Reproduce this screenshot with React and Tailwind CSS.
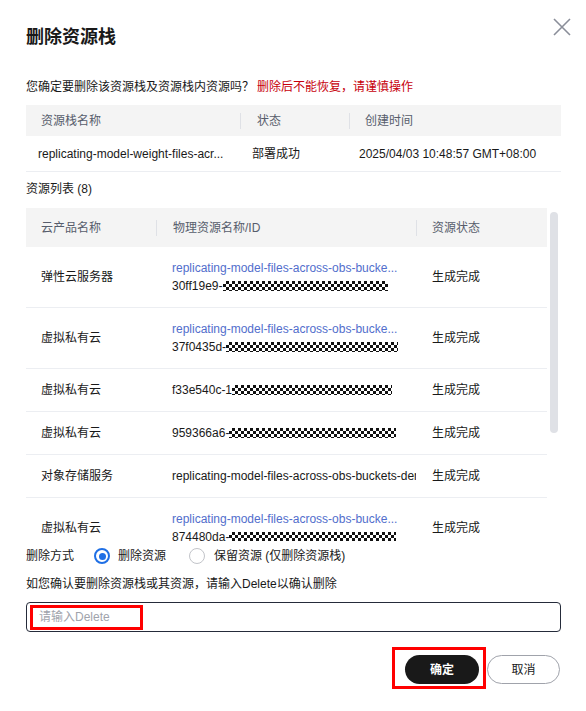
const font = "font-['Liberation_Sans','Noto_Sans_CJK_SC',sans-serif]";

const resources = [
  { type: "弹性云服务器", link: "replicating-model-files-across-obs-bucke...", id: "30ff19e9-", mask: "w-[165px]" },
  { type: "虚拟私有云", link: "replicating-model-files-across-obs-bucke...", id: "37f0435d-", mask: "w-[172px]" },
  { type: "虚拟私有云", id: "f33e540c-1", mask: "w-[160px]" },
  { type: "虚拟私有云", id: "959366a6-", mask: "w-[167px]" },
  { type: "对象存储服务", plain: "replicating-model-files-across-obs-buckets-demo" },
  { type: "虚拟私有云", link: "replicating-model-files-across-obs-bucke...", id: "874480da-", mask: "w-[167px]" },
];

const Mask = ({ w }) => (
  <span
    className={`inline-block h-[10px] align-middle ${w} bg-[repeating-conic-gradient(#111_0_25%,#fff_0_50%)] bg-[length:6px_6px]`}
  ></span>
);

const App = () => {
  return (
    <div className={`w-[586px] h-[711px] bg-white overflow-hidden text-[12px] text-[#191919] ${font}`}>
      <div className="flex items-start justify-between pl-[26px] pr-[15px]">
        <h1 className="pt-[25px] text-[18px] leading-[24px] font-bold text-[#191919]">删除资源栈</h1>
        <svg className="mt-[18px]" width="18" height="18" viewBox="0 0 18 18" fill="none">
          <path d="M1 1L17 17M17 1L1 17" stroke="#8a8e99" strokeWidth="1.6" />
        </svg>
      </div>

      <div className="px-[26px]">
        <p className="mt-[29px] leading-[18px]">
          您确定要删除该资源栈及资源栈内资源吗？
          <span className="ml-[3px] text-[#c7000b]">删除后不能恢复，请谨慎操作</span>
        </p>

        <div className="mt-[9px] w-[535px]">
          <div className="flex h-[31px] items-center bg-[#f4f4f4] text-[#575d6c]">
            <div className="w-[214px] pl-[15px]">资源栈名称</div>
            <div className="w-[109px] flex items-center">
              <span className="h-[16px] w-px bg-[#dfe1e6]"></span>
              <span className="pl-[16px]">状态</span>
            </div>
            <div className="flex-1 flex items-center">
              <span className="h-[16px] w-px bg-[#dfe1e6]"></span>
              <span className="pl-[15px]">创建时间</span>
            </div>
          </div>
          <div className="flex h-[36px] items-center border-b border-[#eceef2]">
            <div className="w-[214px] pl-[12px] whitespace-nowrap">replicating-model-weight-files-acr...</div>
            <div className="w-[109px] pl-[12px]">部署成功</div>
            <div className="flex-1 pl-[10px] whitespace-nowrap">2025/04/03 10:48:57 GMT+08:00</div>
          </div>
        </div>

        <p className="mt-[8px] leading-[18px]">资源列表 (8)</p>

        <div className="mt-[10px] flex h-[333px]">
          <div className="w-[521px] overflow-hidden">
            <div className="flex h-[39px] items-center bg-[#f4f4f4] text-[#575d6c]">
              <div className="w-[130px] pl-[15px]">云产品名称</div>
              <div className="w-[260px] flex items-center">
                <span className="h-[16px] w-px bg-[#dfe1e6]"></span>
                <span className="pl-[16px]">物理资源名称/ID</span>
              </div>
              <div className="flex-1 flex items-center">
                <span className="h-[16px] w-px bg-[#dfe1e6]"></span>
                <span className="pl-[15px]">资源状态</span>
              </div>
            </div>
            {resources.map((r, i) => (
              <div
                key={i}
                className={`flex items-center border-b border-[#eceef2] ${r.link ? "h-[61px]" : "h-[43px]"}`}
              >
                <div className="w-[130px] pl-[15px]">{r.type}</div>
                <div className="w-[260px] pl-[16px] pr-[1px] overflow-hidden whitespace-nowrap leading-[18px]">
                  {r.link && <div className="text-[#526ecc]">{r.link}</div>}
                  {r.plain && <div>{r.plain}</div>}
                  {r.id && (
                    <div className="flex items-center">
                      <span>{r.id}</span>
                      <Mask w={r.mask} />
                    </div>
                  )}
                </div>
                <div className="flex-1 pl-[16px]">生成完成</div>
              </div>
            ))}
          </div>
          <div className="ml-[3px] w-[8px] pt-[4px]">
            <div className="h-[221px] w-[8px] rounded-full bg-[#dfe1e6]"></div>
          </div>
        </div>

        <div className="mt-[5px] flex h-[20px] items-center">
          <span className="w-[68px]">删除方式</span>
          <span className="flex h-[16px] w-[16px] items-center justify-center rounded-full border-2 border-[#1f6fe5]">
            <span className="h-[7px] w-[7px] rounded-full bg-[#1f6fe5]"></span>
          </span>
          <span className="ml-[8px]">删除资源</span>
          <span className="ml-[23px] h-[16px] w-[16px] rounded-full border border-[#c2c4c9]"></span>
          <span className="ml-[9px]">保留资源 (仅删除资源栈)</span>
        </div>

        <p className="mt-[9px] leading-[18px]">如您确认要删除资源栈或其资源，请输入Delete以确认删除</p>

        <div className="mt-[9px] flex h-[30px] w-[535px] items-center rounded-[4px] border border-[#252b3a] pl-[3px]">
          <div className="flex h-[25px] w-[113px] items-center border-[3px] border-[#ff0000] pl-[6px] text-[#a0a3ab]">
            请输入Delete
          </div>
        </div>

        <div className="mt-[15px] flex justify-end items-start">
          <div className="border-[3px] border-[#ff0000] pl-[10px] pr-[4px] pt-[5px] pb-[2px]">
            <button className="h-[29px] w-[74px] rounded-full bg-[#191919] text-white font-bold">确定</button>
          </div>
          <button className="ml-[1px] mt-[8px] h-[29px] w-[73px] rounded-full border border-[#a0a3ab] bg-white text-[#191919]">
            取消
          </button>
        </div>
      </div>
    </div>
  );
};

export default App;
